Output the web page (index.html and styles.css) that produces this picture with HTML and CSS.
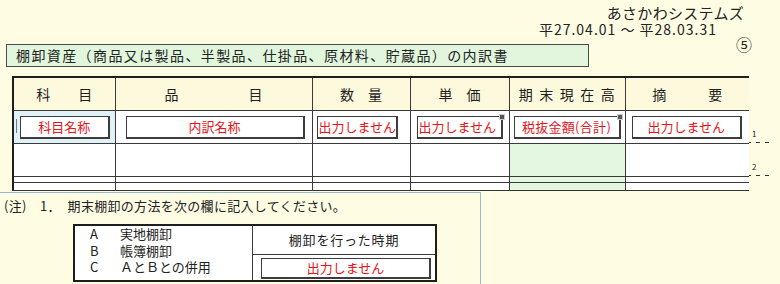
FILE: index.html
```html
<!DOCTYPE html>
<html lang="ja">
<head>
<meta charset="utf-8">
<title>棚卸資産の内訳書</title>
<link rel="stylesheet" href="styles.css">
</head>
<body>
<div class="page">
  <header class="top">
    <div class="company">あさかわシステムズ</div>
    <div class="period">平27.04.01 ～ 平28.03.31</div>
  </header>

  <div class="title-row">
    <div class="title">棚卸資産（商品又は製品、半製品、仕掛品、原材料、貯蔵品）の内訳書</div>
    <span class="sheet-no">⑤</span>
  </div>

  <div class="sheet">
    <div class="sheet-clip">
      <table class="grid">
        <colgroup>
          <col class="c1"><col class="c2"><col class="c3"><col class="c4"><col class="c5"><col class="c6">
        </colgroup>
        <thead>
          <tr>
            <th>科　　目</th>
            <th>品　　　　　目</th>
            <th>数　量</th>
            <th>単　価</th>
            <th class="wide">期末現在高</th>
            <th>摘　　　要</th>
          </tr>
        </thead>
        <tbody>
          <tr class="row">
            <td class="cell-blue"><span class="caret"></span><div class="field center">科目名称</div></td>
            <td><div class="field center f-name">内訳名称</div></td>
            <td><div class="field left f-qty">出力しません</div></td>
            <td><div class="field left f-price">出力しません<span class="tag"></span></div></td>
            <td><div class="field center f-amt">税抜金額(合計)<span class="tag"></span></div></td>
            <td><div class="field center f-note">出力しません</div></td>
          </tr>
          <tr class="row">
            <td></td><td></td><td></td><td></td><td class="cell-green"></td><td></td>
          </tr>
          <tr class="row thin">
            <td></td><td></td><td></td><td></td><td class="cell-green"></td><td></td>
          </tr>
          <tr class="row">
            <td></td><td></td><td></td><td></td><td class="cell-green"></td><td></td>
          </tr>
        </tbody>
      </table>
    </div>
    <div class="marks">
      <div class="mark-head"></div>
      <div class="mark"><span>1</span></div>
      <div class="mark"><span>2</span></div>
    </div>
  </div>

  <section class="notes">
    <p class="note-line">(注)　1．　期末棚卸の方法を次の欄に記入してください。</p>
    <div class="method">
      <ul class="method-list">
        <li><span class="key">A</span>実地棚卸</li>
        <li><span class="key">B</span>帳簿棚卸</li>
        <li><span class="key">C</span>ＡとＢとの併用</li>
      </ul>
      <div class="method-when">
        <div class="when-head">棚卸を行った時期</div>
        <div class="when-body"><div class="field center f-when">出力しません</div></div>
      </div>
    </div>
  </section>
</div>
</body>
</html>
```

FILE: styles.css
```css
html, body {
  margin: 0;
  padding: 0;
}

body {
  background: #fefde4;
  color: #222;
  font-family: "Noto Sans CJK JP", "Noto Sans", sans-serif;
  font-size: 13px;
  width: 780px;
  height: 284px;
  overflow: hidden;
}

/* company name and period, right aligned */
.top {
  height: 40px;
  padding-top: 4px;
  box-sizing: border-box;
}

.company {
  text-align: right;
  padding-right: 36px;
  font-size: 15px;
  line-height: 17px;
  letter-spacing: 0.3px;
}

.period {
  text-align: right;
  padding-right: 63px;
  font-size: 14px;
  line-height: 17px;
  letter-spacing: 1px;
}

.title-row {
  display: flex;
  align-items: flex-start;
  height: 36px;
}

.title {
  margin: 4px 0 0 6px;
  width: 583px;
  height: 23px;
  box-sizing: border-box;
  border: 1px solid #4a4a4a;
  background: #e1f6dd;
  font-size: 14px;
  line-height: 21px;
  padding-left: 9px;
  letter-spacing: 1.4px;
  white-space: nowrap;
  overflow: hidden;
}

.sheet-no {
  margin: -4px 0 0 147px;
  font-size: 16px;
  line-height: 16px;
}

/* main detail table */
.sheet {
  display: flex;
  align-items: flex-start;
  margin-left: 12px;
}

.sheet-clip {
  height: 115px;
  overflow: hidden;
  border-bottom: 1px solid #333;
  box-sizing: border-box;
}

.grid {
  border-collapse: collapse;
  table-layout: fixed;
  width: 737px;
  border: 2px solid #1e1e1e;
  background: #fff;
}

.c1 { width: 102px; }
.c2 { width: 197px; }
.c3 { width: 98px; }
.c4 { width: 99px; }
.c5 { width: 116px; }
.c6 { width: 125px; }

.grid th,
.grid td {
  border: 1px solid #3a3a3a;
  padding: 0;
}

.grid th {
  height: 32px;
  background: #fdf9dc;
  font-weight: normal;
  font-size: 14px;
  color: #1e1e1e;
  white-space: nowrap;
}

.grid th.wide {
  letter-spacing: 6.5px;
  text-indent: 6px;
}

.row td {
  height: 32px;
  position: relative;
}

.row.thin td {
  height: 5px;
}

.cell-blue {
  background: #e0f2f7;
}

.cell-green {
  background: #e3f7e1;
}

/* output fields */
.field {
  position: relative;
  height: 23px;
  box-sizing: border-box;
  border: 1px solid #3d3d3d;
  border-right-width: 2px;
  border-bottom-width: 2px;
  background: #fff;
  color: #e8141a;
  font-size: 13px;
  line-height: 20px;
  white-space: nowrap;
}

.field.center { text-align: center; }
.field.left { text-align: left; padding-left: 1px; }

.cell-blue .field {
  margin: 0 5px 0 6px;
}

.f-name { margin: 0 7px 0 10px; }
.f-qty { margin: 0 12px 0 4px; overflow: hidden; }
.f-price { margin: 0 6px 0 6px; }
.f-amt { margin: 0 4px 0 4px; letter-spacing: 0.3px; }
.f-note { margin: 0 7px 0 6px; }

.tag {
  position: absolute;
  top: -3px;
  right: -4px;
  width: 4px;
  height: 4px;
  background: #555;
  border: 1px solid #ccc;
}

.caret {
  position: absolute;
  left: 2px;
  top: 8px;
  width: 1px;
  height: 14px;
  background: #777;
}

/* line numbers in the right margin */
.marks {
  width: 31px;
}

.mark-head {
  height: 34px;
}

.mark {
  height: 33px;
  box-sizing: border-box;
  position: relative;
  background: linear-gradient(to right, #333 0 2px, transparent 2px 7px, #333 7px 11px, transparent 11px 16px, #333 16px 20px, transparent 20px) no-repeat 0 100% / 24px 1px;
}

.mark span {
  position: absolute;
  left: 3px;
  bottom: 5px;
  font-size: 8px;
  line-height: 8px;
}

/* notes panel with the stocktaking method box */
.notes {
  margin-top: 1px;
  width: 481px;
  height: 100px;
  box-sizing: border-box;
  border-top: 1px solid #9db9c8;
  border-right: 1px solid #9db9c8;
  background: #fefde4;
}

.note-line {
  margin: 0;
  padding: 4px 0 0 4px;
  font-size: 13px;
  line-height: 17px;
  letter-spacing: 0.3px;
  white-space: pre;
}

.method {
  display: flex;
  margin: 10px 0 0 73px;
  width: 364px;
  height: 58px;
  box-sizing: border-box;
  border: 2px solid #1e1e1e;
  background: #fff;
}

.method-list {
  list-style: none;
  margin: 0;
  padding: 0 0 0 15px;
  width: 178px;
  box-sizing: border-box;
  border-right: 1px solid #3a3a3a;
  font-size: 13px;
  line-height: 16.5px;
}

.key {
  display: inline-block;
  width: 30px;
}

.method-when {
  flex: 1;
  display: flex;
  flex-direction: column;
}

.when-head {
  height: 29px;
  box-sizing: border-box;
  border-bottom: 1px solid #3a3a3a;
  text-align: center;
  line-height: 28px;
  font-size: 13px;
  letter-spacing: 0.8px;
}

.when-body {
  flex: 1;
  padding: 3px 4px 0 8px;
}

.f-when {
  height: 21px;
  line-height: 18px;
}
```
